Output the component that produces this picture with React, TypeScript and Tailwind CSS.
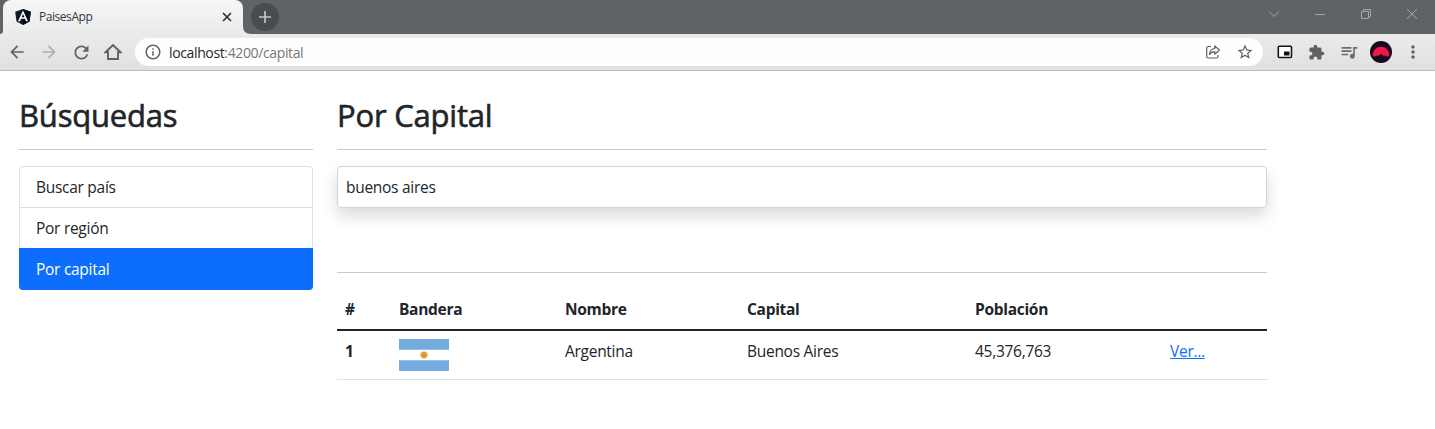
import React from 'react';
import {
  MdArrowBack,
  MdArrowForward,
  MdExtension,
  MdInfoOutline,
  MdMoreVert,
  MdQueueMusic,
  MdRefresh,
  MdStarBorder,
} from 'react-icons/md';

function AngularLogo() {
  return (
    <svg viewBox="0 0 16 16" className="size-4 shrink-0">
      <path d="M8 0 15.8 2.7 14.500 12.500 8 16 1.500 12.500.2 2.700Z" fill="#101a28" />
      <path d="M8 0 15.800 2.700 14.500 12.500 8 16Z" fill="#050a12" />
      <path d="M8 1.500 3 12.300h2l1-2.500h4l1 2.500h2ZM8 5l1.400 3.200H6.600Z" fill="#fff" fillRule="evenodd" />
    </svg>
  );
}

function TabBar() {
  return (
    <div className="flex h-[34px] items-start bg-[#5f6366]">
      <div className="flex h-[34px] w-[3px] items-end">
        <svg viewBox="0 0 3 3" className="size-[3px]">
          <path d="M3 0v3H0Q3 3 3 0Z" fill="#eeeeee" />
        </svg>
      </div>
      <div className="flex h-[34px] w-60 items-center rounded-t-lg bg-linear-to-b from-[#f6f6f6] to-[#ebebeb] pr-[11px] pl-3">
        <AngularLogo />
        <span className="ml-[8px] text-[12px] tracking-[-0.45px] text-[#34373a]">PaisesApp</span>
        <svg viewBox="0 0 10 10" className="ml-auto size-[10px]" stroke="#303336" strokeWidth="1.7">
          <path d="m1 1 8 8M9 1 1 9" />
        </svg>
      </div>
      <div className="flex h-[34px] w-2 items-end">
        <svg viewBox="0 0 8 8" className="size-2">
          <path d="M0 0v8h8Q0 8 0 0Z" fill="#ebebeb" />
        </svg>
      </div>
      <div className="mt-[3px] flex size-7 items-center justify-center rounded-full bg-[#484c4e]">
        <svg viewBox="0 0 12 12" className="size-3" stroke="#c4c6c7" strokeWidth="1.7">
          <path d="M6 0v12M0 6h12" />
        </svg>
      </div>
      <div className="mt-2 mr-[17px] ml-auto flex items-center gap-[34px]">
        <svg viewBox="0 0 12 12" className="size-3" fill="none" stroke="#a5a8a9">
          <path d="m1 3.500 5 5 5-5" />
        </svg>
        <svg viewBox="0 0 12 12" className="size-3" fill="none" stroke="#a5a8a9">
          <path d="M1 6.500h10" />
        </svg>
        <svg viewBox="0 0 12 12" className="size-3" fill="none" stroke="#a5a8a9">
          <path d="M1.500 3.500h7v7h-7zM3.500 3.500v-2h7v7h-2" />
        </svg>
        <svg viewBox="0 0 12 12" className="size-3" fill="none" stroke="#a5a8a9">
          <path d="m1 1 10 10M11 1 1 11" />
        </svg>
      </div>
    </div>
  );
}

function Toolbar() {
  return (
    <div className="flex h-[37px] items-center border-b border-[#bdbdbd] bg-linear-to-b from-[#ebebeb] to-[#e0e0e0] pl-[7px] text-[#5f6163]">
      <MdArrowBack className="size-5" />
      <MdArrowForward className="ml-3 size-5 text-[#b0b0b0]" />
      <MdRefresh className="ml-3 size-[21px]" />
      <svg viewBox="0 0 18 18" className="ml-3 size-[18px]" fill="none" stroke="currentColor" strokeWidth="1.9">
        <path d="M1.500 9.200 9 2l7.500 7.200H14V16H4V9.200Z" />
      </svg>
      <div className="ml-[13px] flex h-7 w-[1128px] items-center rounded-full bg-[#fefefe] pr-[9px] pl-[9px]">
        <MdInfoOutline className="size-[18px]" />
        <span className="ml-[7px] text-[14px] tracking-[-0.37px] text-[#75787b]">
          <span className="text-[#25282b]">localhost</span>:4200/capital
        </span>
        <svg viewBox="0 0 16 16" className="ml-auto size-4" fill="none" stroke="currentColor" strokeWidth="1.200" strokeLinejoin="round">
          <path d="M6 2.500H3.200Q1.700 2.500 1.700 4v8.500q0 1.500 1.500 1.500h8.300q1.500 0 1.500-1.500V11" />
          <path d="M9.700 2v2.500C6.500 4.800 4.800 7 4.500 10.500c1.300-2 2.800-2.800 5.200-2.800v2.500L14.500 6Z" />
        </svg>
        <MdStarBorder className="ml-[15px] size-[18px]" />
      </div>
      <svg viewBox="0 0 16 14" className="ml-[14px] h-[14px] w-4" fill="none" stroke="#151515" strokeWidth="1.6">
        <rect x="1.300" y="1.300" width="13.200" height="11.200" rx="1" fill="#fff" />
        <path d="M7 6.500h5.500v4H7z" fill="#111" stroke="none" />
      </svg>
      <MdExtension className="ml-[15px] size-[17px]" />
      <MdQueueMusic className="ml-[14px] size-5 text-[#6b6d6f]" />
      <svg viewBox="0 0 22 22" className="ml-[11px] size-[22px]">
        <circle cx="11" cy="11" r="11" fill="#180822" />
        <path d="M2.500 14.200C3 9 6.500 5.800 11 5.800s8 3.200 8.500 8.400l-2 1.600-2.500-1.300-1.500.3L11 12.800l-2.500 2-1.500-.3-2.500 1.300Z" fill="#f0174b" />
      </svg>
      <MdMoreVert className="ml-[11px] size-5" />
    </div>
  );
}

function Heading({ children }: { children: React.ReactNode }) {
  return (
    <h1 className="flex h-[78px] items-center pt-[9px] text-[31px] tracking-[-0.2px] [-webkit-text-stroke:0.6px_#212529]">
      {children}
    </h1>
  );
}

const links = ['Buscar país', 'Por región', 'Por capital'];

function Sidebar() {
  return (
    <aside className="w-[294px]">
      <Heading>Búsquedas</Heading>
      <hr className="border-[#c8c9ca]" />
      <ul className="mt-4 flex flex-col">
        {links.map((label, i) => (
          <li
            key={label}
            className={
              i === 2
                ? 'flex h-[42px] items-center rounded-b bg-[#0d6efd] px-[17px] text-white'
                : i === 1
                  ? 'flex h-[41px] items-center border-x border-t border-[#dfdfdf] px-4'
                  : 'flex h-[41px] items-center rounded-t border-x border-t border-[#dfdfdf] px-4'
            }
          >
            {label}
          </li>
        ))}
      </ul>
    </aside>
  );
}

function Flag() {
  return (
    <svg viewBox="0 0 50 32" className="h-8 w-[50px]">
      <path d="M0 0h50v32H0z" fill="#fff" />
      <path d="M0 0h50v10.700H0zM0 21.300h50V32H0z" fill="#74acdf" />
      <circle cx="25" cy="16" r="4" fill="#f3d9a5" />
      <circle cx="25" cy="16" r="3" fill="#dc9a2a" />
    </svg>
  );
}

function Results() {
  return (
    <table className="w-[930px] table-fixed border-collapse text-left">
      <colgroup>
        <col className="w-[54px]" />
        <col className="w-[166px]" />
        <col className="w-[182px]" />
        <col className="w-[228px]" />
        <col className="w-[195px]" />
        <col className="w-[105px]" />
      </colgroup>
      <thead>
        <tr className="h-[42px] border-b-2 border-[#212529] tracking-[-0.3px] [&>th]:px-2 [&>th]:py-0">
          <th>#</th>
          <th>Bandera</th>
          <th>Nombre</th>
          <th>Capital</th>
          <th>Población</th>
          <th />
        </tr>
      </thead>
      <tbody>
        <tr className="h-[49px] border-b border-[#dee2e6] align-top [&>td]:px-2 [&>td]:pt-2">
          <td className="font-bold">1</td>
          <td>
            <Flag />
          </td>
          <td>Argentina</td>
          <td>Buenos Aires</td>
          <td>45,376,763</td>
          <td>
            <a href="#ver" className="text-[#0d6efd] underline">
              Ver...
            </a>
          </td>
        </tr>
      </tbody>
    </table>
  );
}

export default function App() {
  return (
    <div className="h-[429px] overflow-hidden bg-white font-['Open_Sans','Noto_Sans',sans-serif]">
      <TabBar />
      <Toolbar />
      <div className="flex gap-6 pl-[19px] text-[15.5px] leading-6 tracking-[-0.28px] text-[#212529]">
        <Sidebar />
        <main className="w-[930px]">
          <Heading>Por Capital</Heading>
          <hr className="border-[#c8c9ca]" />
          <input
            defaultValue="buenos aires"
            className="mt-4 block h-[42px] w-full rounded border border-[#ced4da] px-2 shadow-[0_8px_16px_rgba(0,0,0,0.15)] outline-none"
          />
          <hr className="mt-16 mb-[15px] border-[#c8c9ca]" />
          <Results />
        </main>
      </div>
    </div>
  );
}
